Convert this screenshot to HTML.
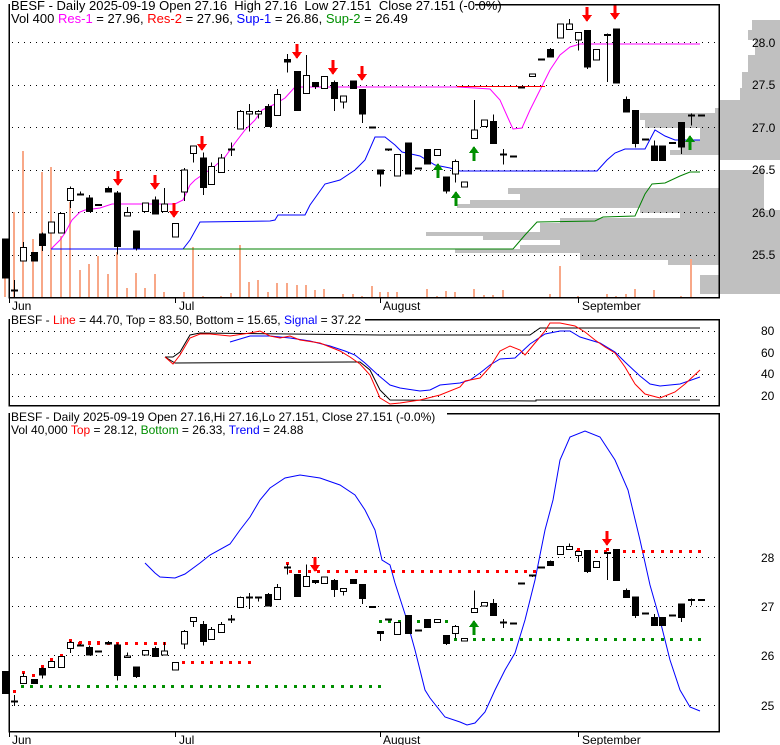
<!DOCTYPE html>
<html><head><meta charset="utf-8">
<style>
html,body{margin:0;padding:0;background:#fff;width:780px;height:745px;overflow:hidden}
svg{display:block}
text{font-family:"Liberation Sans",Arial,sans-serif;font-size:12px;fill:#000;white-space:pre}
</style></head><body>
<svg id="s" width="780" height="745" xmlns="http://www.w3.org/2000/svg" shape-rendering="crispEdges">
<rect x="720" y="100" width="60" height="194" fill="#c0c0c0"/>
<rect x="720" y="160" width="60" height="10" fill="#fff"/>
<rect x="764" y="170" width="16" height="40" fill="#fff"/>
<g id="prof" fill="#c0c0c0"></g>
<g id="grid" stroke="#000" stroke-width="1" stroke-dasharray="1,5"></g>
<g id="vol" fill="#f8a888"></g>
<g id="lines" fill="none" stroke-width="1" shape-rendering="auto"></g>
<g id="dots"></g>
<g id="cand"></g>
<g id="arr"></g>
<g fill="none" stroke="#000" stroke-width="1.5">
<rect x="9" y="4.5" width="710" height="293"/>
<rect x="9" y="319.5" width="710" height="86"/>
<rect x="9" y="413.5" width="710" height="318"/>
</g>
<g stroke="#000" stroke-width="1">
<line x1="9.5" y1="297" x2="9.5" y2="303"/><line x1="175.5" y1="297" x2="175.5" y2="303"/><line x1="380.5" y1="297" x2="380.5" y2="303"/><line x1="578.5" y1="297" x2="578.5" y2="303"/>
<line x1="9.5" y1="731" x2="9.5" y2="737"/><line x1="175.5" y1="731" x2="175.5" y2="737"/><line x1="380.5" y1="731" x2="380.5" y2="737"/><line x1="578.5" y1="731" x2="578.5" y2="737"/>
</g>
<g>
<text x="12" y="310">Jun</text><text x="179" y="310">Jul</text><text x="383" y="310">August</text><text x="582" y="310">September</text>
<text x="12" y="744">Jun</text><text x="179" y="744">Jul</text><text x="383" y="744">August</text><text x="582" y="744">September</text>
</g>
<g style="font-size:13px">
<text x="752" y="47">28.0</text><text x="752" y="89">27.5</text><text x="752" y="132">27.0</text><text x="752" y="174">26.5</text><text x="752" y="217">26.0</text><text x="752" y="259">25.5</text>
<text x="761" y="335">80</text><text x="761" y="357">60</text><text x="761" y="378">40</text><text x="761" y="400">20</text>
<text x="761" y="562">28</text><text x="761" y="611">27</text><text x="761" y="660">26</text><text x="761" y="710">25</text>
</g>
<rect x="10" y="0" width="465" height="13" fill="#fff"/>
<rect x="10" y="13" width="376" height="14" fill="#fff"/>
<text x="11" y="10" style="font-size:13px" xml:space="preserve">BESF - Daily 2025-09-19 Open 27.16  High 27.16  Low 27.151  Close 27.151 (-0.0%)</text>
<text x="11" y="23" style="font-size:13px">Vol 400 <tspan fill="#ff00ff">Res-1</tspan> = 27.96, <tspan fill="#ff0000">Res-2</tspan> = 27.96, <tspan fill="#0000ff">Sup-1</tspan> = 26.86, <tspan fill="#008f00">Sup-2</tspan> = 26.49</text>
<rect x="10" y="314" width="355" height="12" fill="#fff"/>
<text x="11" y="324">BESF - <tspan fill="#ff0000">Line</tspan> = 44.70, Top = 83.50, Bottom = 15.65, <tspan fill="#0000ff">Signal</tspan> = 37.22</text>
<rect x="10" y="408" width="437" height="12" fill="#fff"/>
<rect x="10" y="420" width="300" height="14" fill="#fff"/>
<text x="11" y="421">BESF - Daily 2025-09-19 Open 27.16,Hi 27.16,Lo 27.151, Close 27.151 (-0.0%)</text>
<text x="11" y="434">Vol 40,000 <tspan fill="#ff0000">Top</tspan> = 28.12, <tspan fill="#008f00">Bottom</tspan> = 26.33, <tspan fill="#0000ff">Trend</tspan> = 24.88</text>
</svg>
<script>
var NS="http://www.w3.org/2000/svg";
function el(p,t,a){var e=document.createElementNS(NS,t);for(var k in a)e.setAttribute(k,a[k]);document.getElementById(p).appendChild(e);return e;}
[[20,30,752],[30,40,748],[40,55,755],[55,72,748],[72,88,742],[88,100,740],[100,108,735],[108,113,715],[113,120,640],[120,128,645],[128,140,700],[140,150,680],[150,155,670],[155,188,720],[188,194,508],[194,200,520],[200,204,470],[204,208,457],[208,213,640],[213,218,680],[218,223,560],[223,232,540],[232,236,426],[236,240,483],[240,245,560],[245,249,520],[249,253,455],[253,260,580],[260,265,668],[265,275,765],[275,294,700]].forEach(function(r){el("prof","rect",{x:r[2],y:r[0],width:720-r[2]>0?720-r[2]:0,height:r[1]-r[0]});});
[42,85,127,170,212,255,331,353,374,396,557,606,655,705].forEach(function(y){el("grid","line",{x1:12,x2:719,y1:y+.5,y2:y+.5});});
var C=[[5,25.69,25.22],[14,25.08,25.08,25.2,24.98],[23,25.42,25.59,25.65],[34,25.53,25.42],[42,25.75,25.6,25.76,25.54],[51,25.75,25.89],[61,25.75,25.99],[70,26.13,26.28,26.3,26.05],[80,26.21,26.2,26.24,26.2],[89,26.17,26.0,26.2],[98,26.09,26.07],[108,26.28,26.23,26.3],[117,26.23,25.59,26.25,25.5],[127,25.95,26.0,26.06],[136,25.78,25.57,25.78,25.55],[145,26.0,26.11],[155,26.15,25.97,26.18],[164,26.0,26.1,26.28],[175,25.7,25.87],[184,26.23,26.5,26.52,26.13],[193,26.68,26.78,26.78,26.58],[203,26.64,26.28,26.7,26.2],[211,26.32,26.54,26.58],[221,26.46,26.64,26.68],[231,26.74,26.74,26.82,26.66],[240,26.97,27.19,27.2],[249,27.15,27.19,27.27,26.95],[258,27.15,27.19,27.2,27.1],[268,27.25,27.0,27.27],[277,27.13,27.39,27.45],[287,27.8,27.76,27.86,27.64],[297,27.66,27.19],[306,27.39,27.61,27.85],[315,27.53,27.47,27.53,27.45],[324,27.45,27.6],[334,27.53,27.33,27.55,27.19],[343,27.29,27.37,27.37,27.22],[353,27.55,27.45],[362,27.45,27.15,27.45,27.05],[372,27.0,26.98],[380,26.5,26.44,26.5,26.3],[388,26.74,26.72],[397,26.42,26.68],[408,26.82,26.44],[418,26.52,26.5],[427,26.74,26.56],[437,26.66,26.74],[446,26.42,26.24,26.42,26.22],[455,26.44,26.6,26.62,26.35],[464,26.29,26.36],[474,26.86,26.97,27.32],[484,27.0,27.09],[493,27.07,26.8,27.15],[503,26.68,26.68,26.74,26.56],[513,26.66,26.66],[521,27.47,27.47],[532,27.59,27.63],[541,27.8,27.8],[550,27.92,27.82,27.93],[560,28.04,28.22],[569,28.14,28.22,28.27],[578,28.02,28.12,28.12,27.9],[587,28.14,27.7,28.14,27.68],[596,27.78,27.92],[607,28.09,28.07,28.1,27.53],[616,28.16,27.51],[626,27.33,27.17,27.36],[635,27.2,26.8,27.2,26.76],[645,26.86,26.86],[654,26.78,26.6,26.84],[662,26.78,26.6],[672,26.82,26.82],[681,27.06,26.76,27.06,26.68],[691,27.14,27.14,27.16,27.02],[701,27.14,27.14]];
function yT(p){return 42+(28-p)*85;} function yB(p){return 557+(28-p)*49.3;}
var V={5:277,14:212,23:151,33:239,42:172,51:167,61:236,70:202,80:270,89:264,98:256,108:274,117:252,127:288,136:273,145:288,155:274,164:292,184:292,193:247,203:296,211:297,221:296,231:293,240:245,249:282,258:280,268:292,277:283,287:283,297:285,306:285,315:290,324:289,334:297,343:294,353:294,362:296,372:286,380:292,388:292,397:292,408:297,418:297,427:289,437:296,446:291,455:292,464:297,474:289,484:295,493:295,503:290,550:294,560:266,578:296,596:297,607:294,616:296,626:294,635:289,654:290,662:297,672:297,681:296,691:259,701:297};
for(var k in V){el("vol","rect",{x:+k-1,y:V[k],width:2,height:297-V[k]});}
C.forEach(function(c){
 var x=c[0],o=c[1],cl=c[2],hi=Math.max(o,cl),lo=Math.min(o,cl);
 var h=c[3]!==undefined?c[3]:hi,l=c[4]!==undefined?c[4]:lo;
 [yT,yB].forEach(function(f){
  el("cand","line",{x1:x+.5,x2:x+.5,y1:f(h),y2:f(l),stroke:"#000"});
  var t=f(hi),b=f(lo),hh=Math.max(b-t,1);
  if(hh<2){el("cand","rect",{x:x-3,y:t-0.5,width:7,height:2,fill:"#000"});}
  else el("cand","rect",{x:x-2.5,y:t+0.5,width:6,height:hh-1,fill:cl<o?"#000":"#fff",stroke:"#000","stroke-width":1});
 });
});
function pl(pts,col){el("lines","polyline",{points:pts.map(function(p){return p.join(",")}).join(" "),stroke:col});}
pl([[51,249],[60,240],[65,233],[72,220],[80,212],[85,210],[100,208],[112,204],[175,204],[183,200],[190,185],[195,180],[205,173],[215,166],[225,157],[235,143],[245,130],[255,120],[262,110],[275,104],[285,98],[295,87],[457,87],[475,88],[490,89],[500,100],[508,118],[513,129],[522,128],[530,110],[540,90],[550,70],[560,55],[570,47],[580,44],[700,44]],"#ff00ff");
pl([[457,86.5],[545,86.5]],"#ff0000");
pl([[51,249],[183,249],[190,240],[200,222],[270,221],[275,220],[278,215],[305,215],[310,205],[325,184],[340,180],[355,170],[365,160],[375,137],[385,137],[395,145],[402,152],[420,156],[435,165],[450,168],[460,171],[597,171],[607,160],[615,153],[625,149],[645,149],[655,130],[665,136],[675,140],[700,140]],"#0000ff");
pl([[183,249],[513,249],[525,235],[537,222],[595,221],[603,217],[635,216],[645,194],[652,184],[665,183],[680,176],[690,172],[700,172]],"#008000");
pl([[165,357],[173,357],[180,352],[190,335],[200,333],[380,335],[530,335],[540,328],[700,328]],"#000");
pl([[165,357],[175,363],[350,362],[360,362],[370,370],[380,390],[390,400],[536,401],[536,400],[700,400]],"#000");
pl([[230,342],[250,336],[270,336],[290,338],[310,341],[330,346],[345,351],[355,355],[365,363],[378,375],[390,385],[400,388],[420,391],[430,390],[440,385],[460,383],[470,380],[480,373],[490,365],[500,359],[515,358],[530,344],[545,334],[560,331],[570,331],[580,337],[600,343],[615,352],[625,362],[640,376],[650,384],[660,386],[680,384],[700,377]],"#0000ff");
pl([[165,357],[173,364],[180,355],[190,338],[200,334],[210,334],[230,336],[250,333],[260,331],[270,336],[280,338],[290,336],[300,340],[320,343],[340,351],[350,357],[360,364],[370,375],[380,398],[390,404],[400,403],[420,400],[440,395],[460,387],[465,381],[480,378],[490,367],[500,351],[510,346],[520,350],[525,355],[535,343],[545,331],[550,323],[560,323],[575,326],[585,332],[595,340],[605,347],[615,353],[625,367],[635,384],[645,394],[660,398],[675,392],[685,384],[700,370]],"#ff0000");
pl([[145,563],[155,573],[160,577],[175,578],[185,574],[200,563],[210,555],[230,544],[240,530],[250,517],[260,500],[270,488],[285,478],[300,475],[320,478],[340,485],[355,495],[365,510],[375,530],[382,560],[390,565],[395,583],[405,614],[415,650],[425,690],[430,698],[445,717],[460,722],[467,725],[475,723],[485,712],[495,690],[505,670],[515,653],[525,620],[535,580],[545,530],[553,500],[560,460],[570,437],[585,431],[600,437],[615,460],[628,490],[640,540],[650,585],[660,620],[670,660],[680,690],[690,707],[700,711]],"#0000ff");
function dots(x1,x2,y,col){for(var x=x1;x<=x2;x+=9.4)el("dots","rect",{x:Math.round(x)-1,y:y-1,width:3,height:3,fill:col});}
dots(70,165,643,"#f00");dots(183,250,662,"#f00");dots(290,540,571,"#f00");dots(577,702,551,"#f00");
dots(22,380,686,"#008f00");dots(380,450,621,"#008f00");dots(455,702,639,"#008f00");
[[14,692],[23,673],[33,676],[42,667],[51,660],[61,656],[70,641],[80,643],[89,643],[98,643],[287,564],[315,570],[578,550],[607,550]].forEach(function(p){el("dots","rect",{x:p[0]-1,y:p[1]-2,width:3,height:3,fill:"#f00"});});
function down(x,y){el("arr","path",{d:"M"+(x-1.5)+" "+y+"h3v8h3.5l-5 7l-5 -7h3.5z",fill:"#f00",stroke:"none"});}
function up(x,y){el("arr","path",{d:"M"+(x-1.5)+" "+(y+15)+"h3v-8h3.5l-5 -7l-5 7h3.5z",fill:"#008f00",stroke:"none"});}
[[118,171],[155,175],[174,203],[202,136],[297,44],[333,60],[362,66],[587,7],[615,5],[315,557],[607,531]].forEach(function(a){down(a[0],a[1]);});
[[438,163],[456,191],[474,146],[690,135],[474,620]].forEach(function(a){up(a[0],a[1]);});
[[20,30,752],[30,40,748],[40,55,755],[55,72,748],[72,88,742],[88,100,740]].forEach(function(r){el("prof","rect",{x:r[2],y:r[0],width:780-r[2],height:r[1]-r[0]});});
</script>
</body></html>
